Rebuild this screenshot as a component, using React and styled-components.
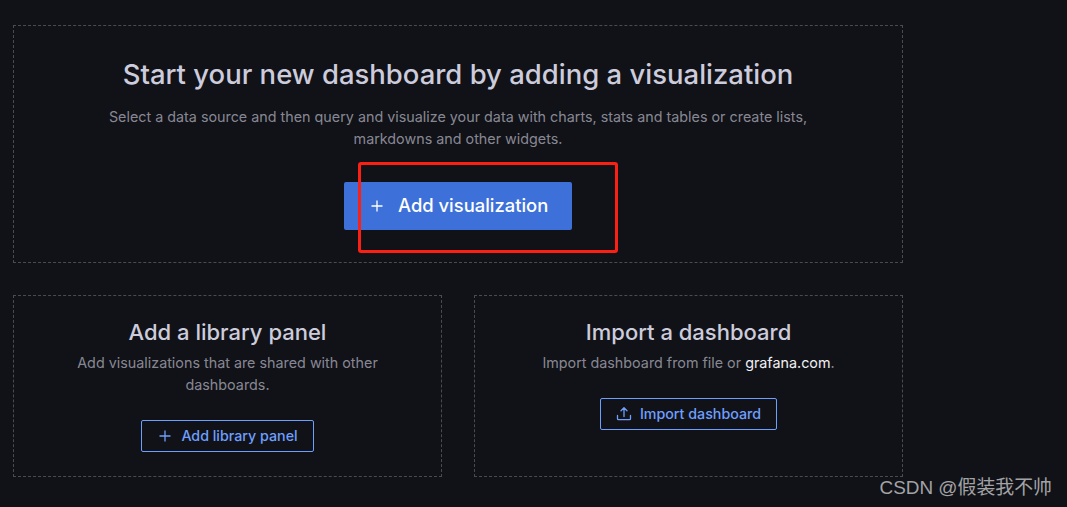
import React from "react";
import styled, { createGlobalStyle } from "styled-components";

const Global = createGlobalStyle`
  html, body { margin: 0; padding: 0; background: #111217; width: 1067px; height: 507px; overflow: hidden; }
  body { font-family: Inter, "Noto Sans", sans-serif; color: #ccccdc; }
`;

const Page = styled.main`
  position: relative;
  box-sizing: border-box;
  width: 1067px;
  height: 507px;
  padding: 25px 0 0 13px;
`;

const Grid = styled.div`
  display: grid;
  width: 890px;
  grid-template-columns: 429px 429px;
  grid-template-rows: 238px 182px;
  gap: 32px;
`;

const Box = styled.section`
  box-sizing: border-box;
  border: 1px dashed rgba(204, 204, 220, 0.3);
  display: flex;
  flex-direction: column;
  align-items: center;
  text-align: center;
  padding-top: ${(p) => p.$top}px;
  grid-column: ${(p) => (p.$wide ? "1 / -1" : "auto")};
`;

const HeroTitle = styled.h1`
  margin: 0;
  font-size: 27.47px;
  line-height: 34px;
  font-weight: 500;
  color: #ccccdc;
`;

const HeroText = styled.p`
  margin: 15px 0 0;
  width: 720px;
  font-size: 14.33px;
  line-height: 22px;
  color: rgba(204, 204, 220, 0.65);
`;

const CardTitle = styled.h2`
  margin: 0;
  font-size: 22px;
  line-height: 26px;
  font-weight: 500;
  color: #ccccdc;
`;

const CardText = styled.p`
  margin: 7px 0 0;
  width: 340px;
  font-size: 14.33px;
  line-height: 22px;
  color: rgba(204, 204, 220, 0.65);
`;

const Link = styled.a`
  color: #f0f0f5;
  text-decoration: none;
`;

const Label = styled.span`
  margin-bottom: 2px;
`;

const PrimaryButton = styled.button`
  box-sizing: border-box;
  display: flex;
  align-items: center;
  gap: 13px;
  width: 228px;
  height: 48px;
  margin: 32px 0 0;
  padding: 0 0 0 25px;
  border: 0;
  border-radius: 2px;
  background: #3d71d9;
  color: #fff;
  font: 500 18.4px Inter, sans-serif;
`;

const OutlineButton = styled.button`
  box-sizing: border-box;
  display: flex;
  align-items: center;
  gap: 8px;
  height: 32px;
  margin: ${(p) => p.$top}px 0 0;
  padding: 0 15px;
  border: 1px solid #6e9fff;
  border-radius: 2px;
  background: transparent;
  color: #6e9fff;
  font: 500 14.25px Inter, sans-serif;
`;

const Icon = styled.svg`
  flex: none;
  display: block;
`;

const Highlight = styled.div`
  position: absolute;
  left: 358px;
  top: 162px;
  width: 260px;
  height: 91px;
  box-sizing: border-box;
  border: 3px solid #fb1f14;
  border-radius: 3px;
  pointer-events: none;
`;

const Watermark = styled.div`
  position: absolute;
  right: 15px;
  top: 476px;
  font: 400 18.9px/24px "Liberation Sans", "Noto Sans CJK SC", sans-serif;
  color: #a3a3a6;
  white-space: nowrap;
`;

const Plus = ({ size }) => (
  <Icon width={size} height={size} viewBox="0 0 16 16" fill="none" stroke="currentColor" strokeWidth="1.3">
    <path d="M8 2.5v11M2.5 8h11" />
  </Icon>
);

const Upload = () => (
  <Icon width="16" height="16" viewBox="0 0 16 16" fill="none" stroke="currentColor" strokeWidth="1.3" strokeLinecap="round" strokeLinejoin="round">
    <path d="M1.5 9.5v3.2c0 .6.4 1 1 1h11c.6 0 1-.4 1-1V9.5" />
    <path d="M8 10.5V2M5 4.8 8 1.8l3 3" />
  </Icon>
);

export default function App() {
  return (
    <Page>
      <Global />
      <Grid>
        <Box $wide $top={31}>
          <HeroTitle>Start your new dashboard by adding a visualization</HeroTitle>
          <HeroText>
            Select a data source and then query and visualize your data with charts, stats and tables or create lists, markdowns and other widgets.
          </HeroText>
          <PrimaryButton>
            <Plus size={16} />
            <Label>Add visualization</Label>
          </PrimaryButton>
        </Box>
        <Box $top={23}>
          <CardTitle>Add a library panel</CardTitle>
          <CardText>Add visualizations that are shared with other dashboards.</CardText>
          <OutlineButton $top={24}>
            <Plus size={16} />
            <Label>Add library panel</Label>
          </OutlineButton>
        </Box>
        <Box $top={23}>
          <CardTitle>Import a dashboard</CardTitle>
          <CardText>
            Import dashboard from file or <Link href="#">grafana.com</Link>.
          </CardText>
          <OutlineButton $top={24}>
            <Upload />
            <Label>Import dashboard</Label>
          </OutlineButton>
        </Box>
      </Grid>
      <Highlight />
      <Watermark>CSDN @假装我不帅</Watermark>
    </Page>
  );
}
